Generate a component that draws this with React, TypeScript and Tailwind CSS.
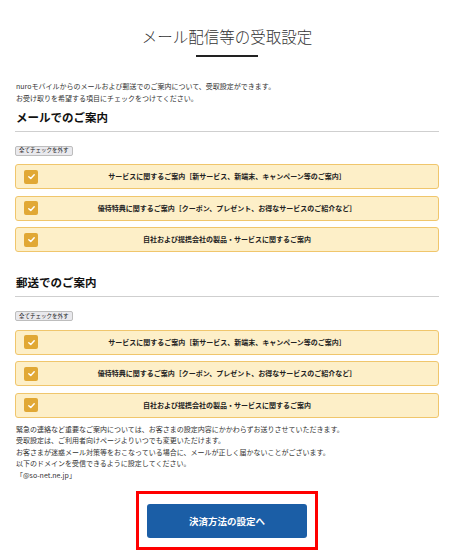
import React from "react";

const font = { fontFamily: '"Noto Sans CJK JP", "Noto Sans", sans-serif' };

function Check() {
  return (
    <div className="w-[14px] h-[14px] rounded-[2px] bg-[#e1a835] flex items-center justify-center shrink-0">
      <svg width="9" height="9" viewBox="0 0 10 10">
        <polyline points="2,5.2 4.2,7.2 8,3" fill="none" stroke="#ffffff" strokeWidth="1.6" strokeLinecap="round" strokeLinejoin="round" />
      </svg>
    </div>
  );
}

function Row({ text }: { text: string }) {
  return (
    <div className="h-[25px] rounded-[3px] border border-[#f0c66c] bg-[#fdefc8] flex items-center pl-[8px] pr-[22px]">
      <Check />
      <div className="flex-1 text-center text-[7px] font-bold text-[#222] leading-none">{text}</div>
    </div>
  );
}

function Section({ title, first }: { title: string; first?: boolean }) {
  const items = [
    "サービスに関するご案内［新サービス、新端末、キャンペーン等のご案内］",
    "優待特典に関するご案内［クーポン、プレゼント、お得なサービスのご紹介など］",
    "自社および提携会社の製品・サービスに関するご案内",
  ];
  return (
    <div className={first ? "mt-[5px]" : "mt-[22px]"}>
      <div className="pl-[1px] text-[11.5px] font-bold leading-[16px] text-[#111]">{title}</div>
      <div className="mt-[6px] border-b border-[#cfcfcf]" />
      <div className="mt-[14px] inline-flex items-center h-[10px] px-[3px] rounded-[2px] border border-[#bdbdbd] bg-[#e9e9ed] text-[5.5px] leading-none text-[#222]">
        全てチェックを外す
      </div>
      <div className="mt-[7px] flex flex-col gap-[6.5px]">
        {items.map((t) => (
          <Row key={t} text={t} />
        ))}
      </div>
    </div>
  );
}

export default function App() {
  return (
    <div className="w-[454px] h-[560px] bg-white overflow-hidden px-[15px]" style={font}>
      <div className="pt-[26px] text-center text-[15.5px] leading-[20px] text-[#333] font-light">メール配信等の受取設定</div>
      <div className="mt-[9px] mx-auto w-[62px] h-[2px] bg-[#222]" />
      <div className="mt-[23px] pl-[1px] text-[7px] leading-[12px] text-[#333]">
        <p>nuroモバイルからのメールおよび郵送でのご案内について、受取設定ができます。</p>
        <p>お受け取りを希望する項目にチェックをつけてください。</p>
      </div>
      <Section title="メールでのご案内" first />
      <Section title="郵送でのご案内" />
      <div className="mt-[6px] pl-[1px] text-[7px] leading-[11.5px] text-[#333]">
        <p>緊急の連絡など重要なご案内については、お客さまの設定内容にかかわらずお送りさせていただきます。</p>
        <p>受取設定は、ご利用者向けページよりいつでも変更いただけます。</p>
        <p>お客さまが迷惑メール対策等をおこなっている場合に、メールが正しく届かないことがございます。</p>
        <p>以下のドメインを受信できるように設定してください。</p>
        <p>「@so-net.ne.jp」</p>
      </div>
      <div className="mt-[10px] flex justify-center">
        <div className="w-[182px] h-[59px] border-[3px] border-[#ff0000] flex items-start justify-center pt-[10px]">
          <div className="w-[160px] h-[34px] rounded-[3px] bg-[#1b5ea6] flex items-center justify-center text-white text-[9.5px] font-bold">
            決済方法の設定へ
          </div>
        </div>
      </div>
    </div>
  );
}
